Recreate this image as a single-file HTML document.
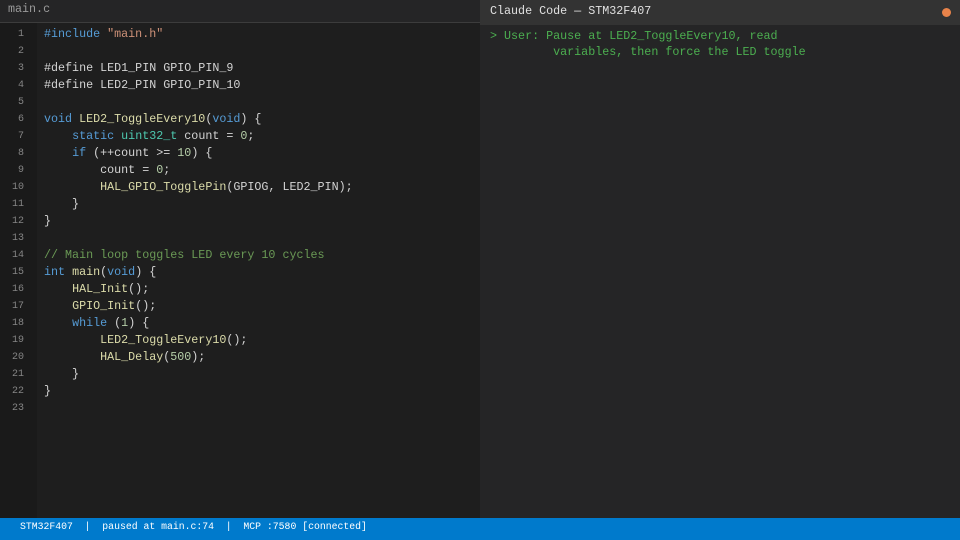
<!DOCTYPE html>
<html><head><style>
*{margin:0;padding:0;box-sizing:border-box}
body{width:960px;height:540px;background:#1e1e1e;font-family:"Liberation Mono","DejaVu Sans Mono",monospace;overflow:hidden;position:relative}
.tabbar{position:absolute;left:0;top:0;width:480px;height:23px;background:#252526;border-bottom:1px solid #3c3c3c;color:#9a9a9a;font-size:11.7px;padding:2px 0 0 8px}
.gutter{position:absolute;left:0;top:23px;width:37px;height:495px;background:#1a1a1a}
.code{position:absolute;left:0;top:26px;width:480px;font-size:11.7px;line-height:17px;color:#d4d4d4;white-space:pre}
.code div{height:17px;line-height:17px}
.ln{display:inline-block;width:24px;text-align:right;color:#858585;font-size:10px;margin-right:20px;line-height:17px;vertical-align:top}
.k{color:#569cd6}.s{color:#ce9178}.f{color:#dcdcaa}.n{color:#b5cea8}.t{color:#4ec9b0}.c{color:#6a9955}
.right{position:absolute;left:480px;top:0;width:480px;height:518px;background:#252526}
.rhead{height:25px;background:#333333;color:#e0e0e0;font-size:11.7px;padding:4px 0 0 10px;position:relative}
.dot{position:absolute;right:9px;top:8px;width:9px;height:9px;border-radius:50%;background:#e8834a}
.msg{color:#4caf50;font-size:11.7px;line-height:16px;padding:3px 0 0 10px;white-space:pre}
.status{position:absolute;left:0;top:518px;width:960px;height:22px;background:#007acc;color:#fff;font-size:9.8px;padding:3px 0 0 20px;white-space:pre}
</style></head><body>
<div class="tabbar">main.c</div>
<div class="gutter"></div>
<div class="code"><div><span class="ln">1</span><span class="k">#include</span> <span class="s">"main.h"</span></div><div><span class="ln">2</span></div><div><span class="ln">3</span>#define LED1_PIN GPIO_PIN_9</div><div><span class="ln">4</span>#define LED2_PIN GPIO_PIN_10</div><div><span class="ln">5</span></div><div><span class="ln">6</span><span class="k">void</span> <span class="f">LED2_ToggleEvery10</span>(<span class="k">void</span>) {</div><div><span class="ln">7</span>    <span class="k">static</span> <span class="t">uint32_t</span> count = <span class="n">0</span>;</div><div><span class="ln">8</span>    <span class="k">if</span> (++count &gt;= <span class="n">10</span>) {</div><div><span class="ln">9</span>        count = <span class="n">0</span>;</div><div><span class="ln">10</span>        <span class="f">HAL_GPIO_TogglePin</span>(GPIOG, LED2_PIN);</div><div><span class="ln">11</span>    }</div><div><span class="ln">12</span>}</div><div><span class="ln">13</span></div><div><span class="ln">14</span><span class="c">// Main loop toggles LED every 10 cycles</span></div><div><span class="ln">15</span><span class="k">int</span> <span class="f">main</span>(<span class="k">void</span>) {</div><div><span class="ln">16</span>    <span class="f">HAL_Init</span>();</div><div><span class="ln">17</span>    <span class="f">GPIO_Init</span>();</div><div><span class="ln">18</span>    <span class="k">while</span> (<span class="n">1</span>) {</div><div><span class="ln">19</span>        <span class="f">LED2_ToggleEvery10</span>();</div><div><span class="ln">20</span>        <span class="f">HAL_Delay</span>(<span class="n">500</span>);</div><div><span class="ln">21</span>    }</div><div><span class="ln">22</span>}</div><div><span class="ln">23</span></div></div>
<div class="right">
<div class="rhead">Claude Code — STM32F407<div class="dot"></div></div>
<div class="msg">&gt; User: Pause at LED2_ToggleEvery10, read
         variables, then force the LED toggle</div>
</div>
<div class="status">STM32F407  |  paused at main.c:74  |  MCP :7580 [connected]</div>
</body></html>
